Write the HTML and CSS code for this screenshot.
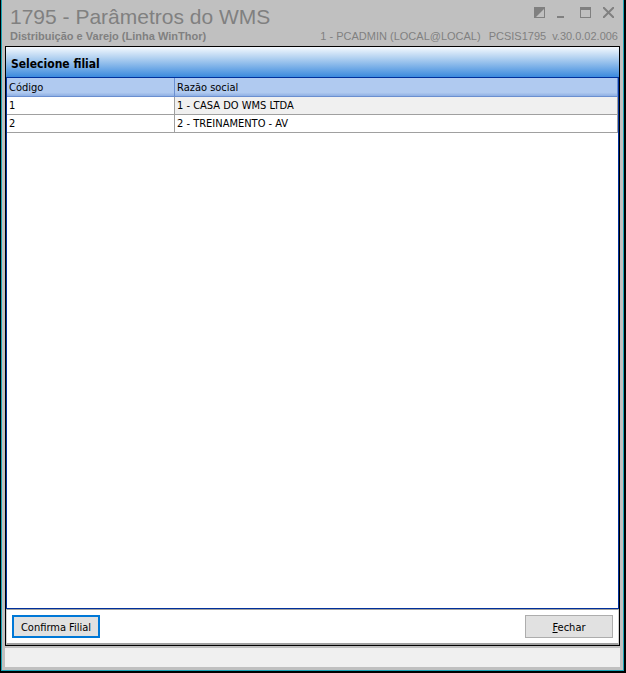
FILE: index.html
```html
<!DOCTYPE html>
<html lang="pt-BR">
<head>
    <meta charset="UTF-8">
    <meta name="viewport" content="width=device-width, initial-scale=1.0">
    <title>1795 - Parâmetros do WMS</title>
    <link rel="stylesheet" href="styles.css">
</head>
<body>
    <div class="window">
        <header class="titlebar">
            <div class="title-row">
                <h1>1795 - Parâmetros do WMS</h1>
                <div class="window-buttons">
                    <button type="button" aria-label="Tema">
                        <svg width="11" height="11" viewBox="0 0 11 11"><path d="M0 0h11v11H0zM10 2v8H2z" fill="#808080" fill-rule="evenodd"/></svg>
                    </button>
                    <button type="button" aria-label="Minimizar">
                        <svg width="11" height="11" viewBox="0 0 11 11"><path d="M0 9h7v2H0z" fill="#808080"/></svg>
                    </button>
                    <button type="button" aria-label="Maximizar">
                        <svg width="11" height="11" viewBox="0 0 11 11"><path d="M0 0h11v11H0zM1 3v7h9V3z" fill="#808080" fill-rule="evenodd"/></svg>
                    </button>
                    <button type="button" aria-label="Fechar janela">
                        <svg width="11" height="11" viewBox="0 0 11 11"><path d="M0 0l11 11M11 0L0 11" stroke="#808080" stroke-width="2"/></svg>
                    </button>
                </div>
            </div>
            <div class="info-row">
                <strong>Distribuição e Varejo (Linha WinThor)</strong>
                <span class="user">1 - PCADMIN (LOCAL@LOCAL)</span>
                <span class="program">PCSIS1795</span>
                <span>v.30.0.02.006</span>
            </div>
        </header>

        <main class="panel">
            <h2>Selecione filial</h2>
            <div class="grid">
                <table>
                    <thead>
                        <tr>
                            <th class="code">Código</th>
                            <th>Razão social</th>
                        </tr>
                    </thead>
                    <tbody>
                        <tr>
                            <td>1</td>
                            <td class="selected">1 - CASA DO WMS LTDA</td>
                        </tr>
                        <tr>
                            <td>2</td>
                            <td>2 - TREINAMENTO - AV</td>
                        </tr>
                    </tbody>
                </table>
            </div>
            <div class="actions">
                <button type="button" class="btn btn-default">Confirma Filial</button>
                <button type="button" class="btn" accesskey="f"><u>F</u>echar</button>
            </div>
        </main>

        <footer class="statusbar"></footer>
    </div>
</body>
</html>
```
FILE: styles.css
```css
* {
    box-sizing: border-box;
}
body {
    margin: 0;
    padding: 0 2px 2px 1px;
    height: 100vh;
    background-color: #000;
    font-family: "DejaVu Sans Condensed", Tahoma, sans-serif;
    font-size: 11px;
    color: #000;
}
.window {
    display: flex;
    flex-direction: column;
    height: 100%;
    padding: 0 3px 3px;
    background-color: #c0c0c0;
    border: 1px solid #1aa3b5;
    border-top: 0;
}

/* titlebar */
.titlebar {
    flex: none;
    height: 46px;
    padding: 5px 2px 0 5px;
    font-family: "Liberation Sans", Arial, sans-serif;
    color: #808080;
}
.title-row {
    display: flex;
    justify-content: space-between;
    height: 24px;
}
h1 {
    margin: 0;
    font-size: 21px;
    font-weight: normal;
    line-height: 24px;
}
.window-buttons {
    display: flex;
    align-items: flex-start;
    gap: 12px;
    padding: 2px 4px 0 0;
}
.window-buttons button {
    padding: 0;
    border: 0;
    background: none;
}
.window-buttons svg {
    display: block;
}
.info-row {
    display: flex;
    font-size: 11px;
    line-height: 14px;
    white-space: pre;
}
.user {
    margin-left: auto;
}
.program {
    margin: 0 6px 0 8px;
}

/* panel */
.panel {
    flex: 1;
    display: flex;
    flex-direction: column;
    min-height: 0;
    background-color: #fff;
    border: 1px solid #000;
}
h2 {
    flex: none;
    margin: 0;
    padding: 4px 5px 0;
    height: 30px;
    font-size: 12px;
    line-height: 26px;
    background: linear-gradient(#f4f9fe, #b5d3f1 35%, #3b8ade);
}
.grid {
    flex: 1;
    min-height: 0;
    overflow: auto;
    border: 1px solid #00309c;
}
table {
    width: 100%;
    table-layout: fixed;
    border-collapse: separate;
    border-spacing: 0;
}
th, td {
    height: 18px;
    padding: 1px 2px 0;
    line-height: 16px;
    text-align: left;
    font-weight: normal;
    border-right: 1px solid #a0a0a0;
    border-bottom: 1px solid #a0a0a0;
}
th {
    height: 19px;
    padding-top: 2px;
    background: linear-gradient(#b0caf0 80%, #8fb0e4);
    border-color: #6a8fd0;
}
.code {
    width: 168px;
}
.selected {
    background-color: #f0f0f0;
}

/* buttons */
.actions {
    flex: none;
    display: flex;
    justify-content: space-between;
    padding: 5px;
    border: 1px solid #a0a0a0;
    border-width: 1px 1px 2px;
    border-left-color: #d0d0d0;
    border-right-color: #d0d0d0;
}
.btn {
    width: 88px;
    height: 23px;
    padding: 1px 0 0;
    font: inherit;
    color: #000;
    background-color: #e1e1e1;
    border: 1px solid #adadad;
}
.btn-default {
    border: 2px solid #0078d7;
}

.statusbar {
    flex: none;
    height: 19px;
    margin-top: 2px;
    background-color: #f0f0f0;
}
```
